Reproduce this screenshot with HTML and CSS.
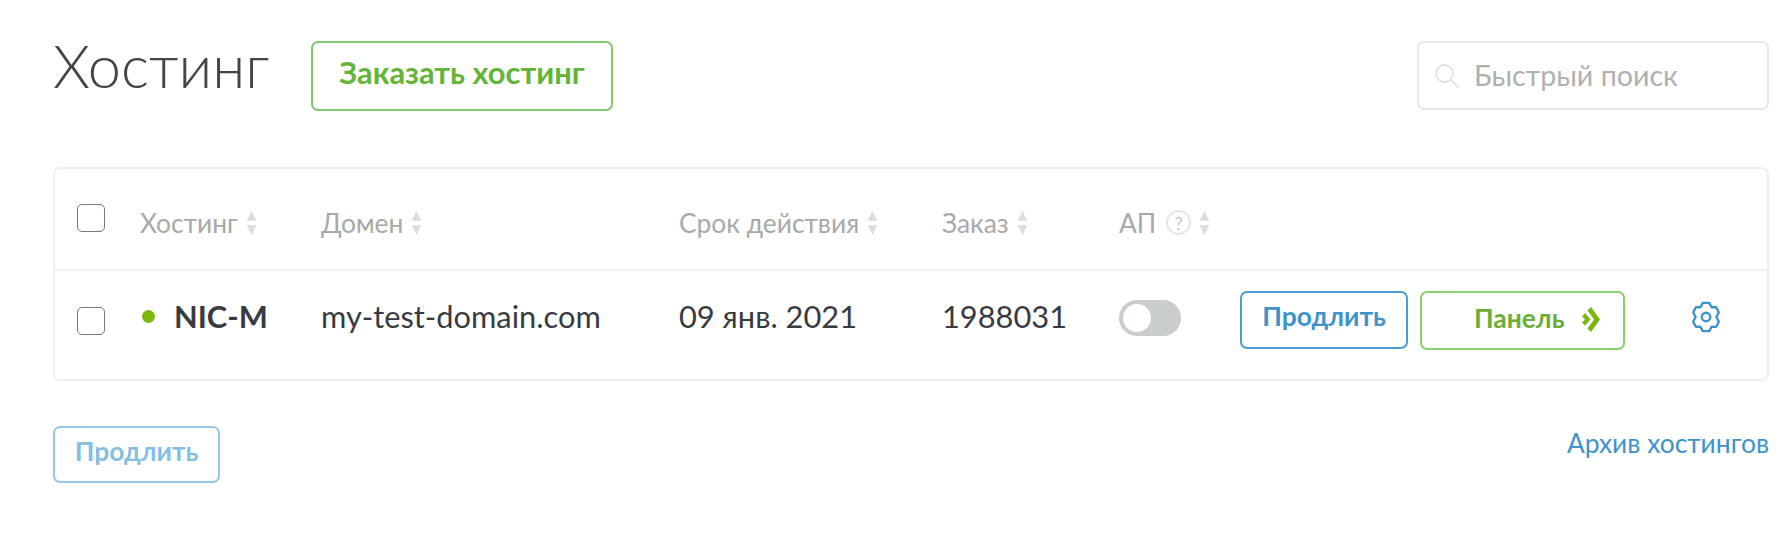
FILE: index.html
```html
<!DOCTYPE html>
<html lang="ru">
<head>
<meta charset="utf-8">
<title>Хостинг</title>
<link rel="stylesheet" href="styles.css">
</head>
<body>
<main class="page">
  <header class="top">
    <h1 class="title">Хостинг</h1>
    <a class="btn btn-order">Заказать хостинг</a>
    <label class="search">
      <svg class="search-icon" viewBox="0 0 26 26" fill="none" stroke="#d8d8d8" stroke-width="1.3"><circle cx="10.5" cy="10.5" r="8.5"/><path d="M16.6 16.6 25 25"/></svg>
      <span>Быстрый поиск</span>
    </label>
  </header>

  <section class="table">
    <div class="row row-head">
      <span class="check"></span>
      <span class="th">Хостинг<svg class="sort" viewBox="0 0 10 22"><path d="M5 0 9.500 9H.5zM5 22 .5 13h9z"/></svg></span>
      <span class="th">Домен<svg class="sort" viewBox="0 0 10 22"><path d="M5 0 9.500 9H.5zM5 22 .5 13h9z"/></svg></span>
      <span class="th">Срок действия<svg class="sort" viewBox="0 0 10 22"><path d="M5 0 9.500 9H.5zM5 22 .5 13h9z"/></svg></span>
      <span class="th">Заказ<svg class="sort" viewBox="0 0 10 22"><path d="M5 0 9.500 9H.5zM5 22 .5 13h9z"/></svg></span>
      <span class="th">АП<span class="hint">?</span><svg class="sort" viewBox="0 0 10 22"><path d="M5 0 9.500 9H.5zM5 22 .5 13h9z"/></svg></span>
    </div>
    <div class="row row-body">
      <span class="check"></span>
      <span class="name"><i class="dot"></i>NIC-M</span>
      <span class="td">my-test-domain.com</span>
      <span class="td">09 янв. 2021</span>
      <span class="td">1988031</span>
      <span class="toggle"><i class="knob"></i></span>
      <a class="btn btn-renew">Продлить</a>
      <a class="btn btn-panel">Панель<svg class="chev" viewBox="0 0 18 25"><path d="M3 6 8.500 12.500 3 18.500 0 15.500 3 12.500 0 9.500zM9 0 18 12.500 9 25 5.500 21.500 12 12.500 5.500 3.500z" fill="#7ab80e"/></svg></a>
      <svg class="gear" viewBox="0 0 26 30" fill="none" stroke="#3d93cb" stroke-width="2.2" stroke-linejoin="round"><path d="M10 1.800H16L18.250 5.900 22.500 5.800 25 10.500 22.800 15 25 19.500 22.500 24.200 18.250 24.100 16 28.200H10L7.750 24.100 3.500 24.200 1 19.500 3.200 15 1 10.500 3.500 5.800 7.750 5.900Z"/><circle cx="13" cy="15" r="4"/></svg>
    </div>
  </section>

  <footer class="bottom">
    <a class="btn btn-renew-off">Продлить</a>
    <a class="archive">Архив хостингов</a>
  </footer>
</main>
</body>
</html>
```
FILE: styles.css
```css
* { box-sizing: border-box; }
html, body { margin: 0; background: #fff; }
body { font-family: Lato, "Open Sans", sans-serif; color: #383b3f; }
.page { padding: 41px 11px 0 53px; }
a { cursor: pointer; }

.top { display: flex; align-items: flex-start; height: 69px; }
.title { flex: none; margin: -11px 0 0; width: 258px; font-size: 59.5px; line-height: 70px; font-weight: 300; color: #444; }
.btn { display: flex; flex: none; align-items: center; justify-content: center; border: 2px solid; border-radius: 7px; font-weight: 700; background: #fff; }
.btn-order { width: 302px; height: 70px; padding-bottom: 8px; border-color: #84c76c; color: #62b536; font-size: 30.8px; }
.search { margin-left: auto; width: 352px; height: 69px; display: flex; align-items: center; padding: 0 0 2px 15px; border: 2px solid #e7e7e7; border-radius: 7px; color: #b0b0b0; font-size: 28.6px; }
.search-icon { width: 26px; height: 26px; margin: 2px 14px 0 0; }

.table { margin-top: 57px; height: 214px; border: 2px solid #efefef; border-radius: 7px; }
.row { display: grid; grid-template-columns: 63px 181px 358px 263px 177px 121px 180px 272px 1fr; align-items: center; padding-left: 22px; }
.row-head { height: 102px; border-bottom: 2px solid #efefef; }
.row-body { height: 108px; padding-bottom: 8px; }
.check { width: 28px; height: 28px; border: 1px solid #77787a; border-radius: 5px; background: #fff; }
.row-head .check { margin-top: -2px; }
.row-body .check { margin-top: 0; }
.th { display: flex; align-items: center; color: #a9a9a9; font-size: 26.4px; margin-top: 7px; }
.sort { width: 11px; height: 24px; margin-left: 8px; fill: #dcdcdc; }
.hint { display: flex; align-items: center; justify-content: center; width: 25px; height: 25px; margin-left: 10px; border: 2px solid #e6e6e6; border-radius: 50%; color: #c4c4c4; font-size: 18px; font-weight: 400; }
.hint + .sort { margin-left: 8px; }

.name { display: flex; align-items: center; font-size: 30.8px; font-weight: 700; color: #383b3f; margin-top: -10px; }
.dot { width: 13px; height: 13px; margin-left: 2px; margin-right: 19px; border-radius: 50%; background: #7ab80e; }
.td { font-size: 30.8px; color: #383b3f; margin-top: -10px; }
.toggle { display: block; width: 62px; height: 36px; margin-top: -7px; padding: 4px; border-radius: 18px; background: #cacdce; }
.knob { display: block; width: 28px; height: 28px; border-radius: 50%; background: #fff; }
.btn-renew { width: 168px; height: 58px; margin-top: -2px; border-color: #4b9fd2; color: #3f93cb; font-size: 26.4px; padding-bottom: 8px; }
.btn-panel { width: 205px; height: 59px; margin-top: -1px; justify-content: flex-start; padding: 0 0 6px 52px; border-color: #8dcf6f; color: #6cae35; font-size: 26.4px; }
.chev { width: 18px; height: 25px; margin: 4px 0 0 18px; }
.gear { width: 28px; height: 32px; margin: -8px 0 0 0; }

.bottom { display: flex; justify-content: space-between; align-items: flex-start; margin-top: 45px; }
.btn-renew-off { width: 167px; height: 57px; border-color: #96c8e6; color: #85bfe2; font-size: 26.4px; padding-bottom: 8px; }
.archive { color: #3f93cb; font-size: 26.4px; line-height: 30px; margin-top: 2px; }
```
